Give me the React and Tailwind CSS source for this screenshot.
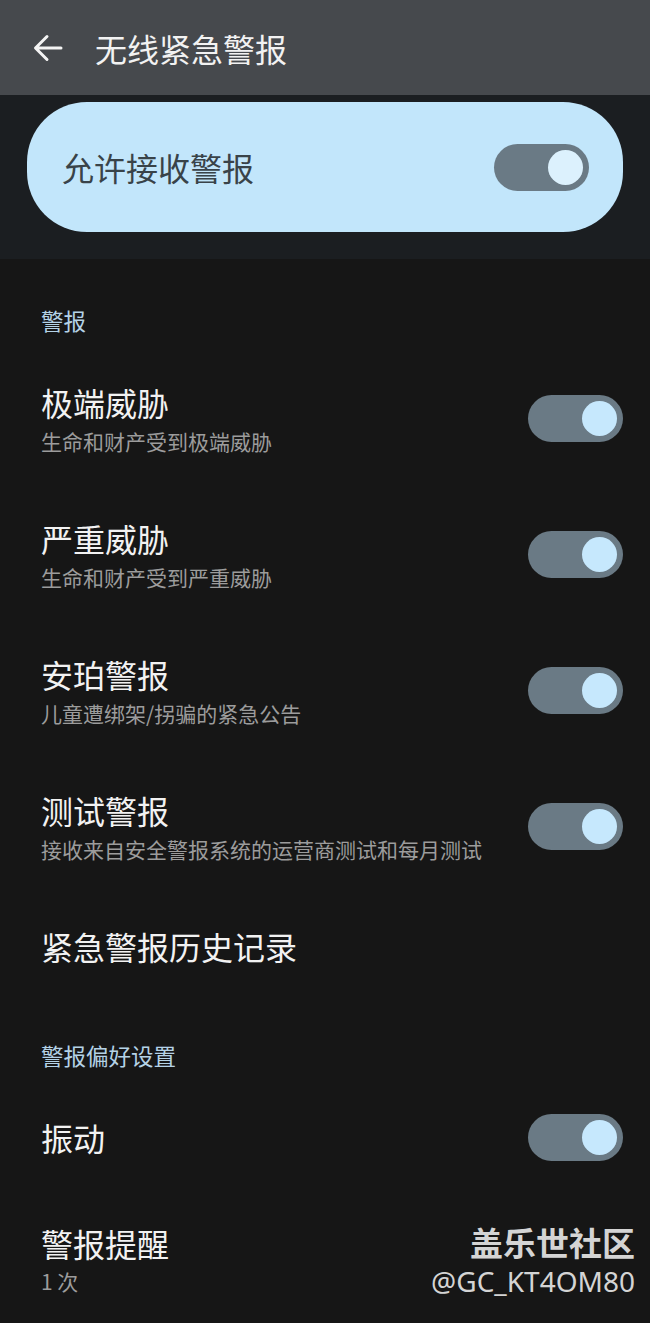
import React from "react";

const cjk = { fontFamily: '"Noto Sans CJK SC", "Noto Sans", sans-serif' };

function Toggle({ knob = "bg-[#c6e8fd]" }) {
  return (
    <div className="w-[95px] h-[47px] rounded-full bg-[#6a7a85] flex items-center justify-end pr-[6px] shrink-0">
      <div className={`w-[35px] h-[35px] rounded-full ${knob}`} />
    </div>
  );
}

function SwitchRow({ title, sub }) {
  return (
    <div className="h-[136px] flex items-center justify-between pl-[41px] pr-[27px]">
      <div className="flex flex-col">
        <span className="text-[32px] leading-[40px] text-[#f2f2f2]">{title}</span>
        <span className="mt-[5px] text-[21px] leading-[28px] text-[#9c9c9c]">{sub}</span>
      </div>
      <Toggle />
    </div>
  );
}

function SectionHeader({ children, pt }) {
  return (
    <div className={pt}>
      <span className="text-[22.5px] leading-[30px] text-[#b4d2e6]">{children}</span>
    </div>
  );
}

export default function App() {
  return (
    <div className="relative w-[650px] h-[1323px] overflow-hidden bg-[#161616]" style={cjk}>
      {/* top bar */}
      <div className="h-[95px] bg-[#46494d] flex items-center">
        <svg className="ml-[32px]" width="32" height="32" viewBox="0 0 32 32" fill="none">
          <path d="M29 16H4M15 4.5L3.5 16L15 27.5" stroke="#f4f4f4" strokeWidth="3" strokeLinecap="round" strokeLinejoin="round" />
        </svg>
        <span className="ml-[31px] text-[32px] leading-[40px] text-[#f2f2f2]">无线紧急警报</span>
      </div>

      {/* master switch */}
      <div className="bg-[#1b1e21] px-[27px] pt-[7px] pb-[27px]">
        <div className="h-[130px] rounded-[60px] bg-[#c2e6fb] flex items-center justify-between pl-[35px] pr-[34px]">
          <span className="text-[32px] leading-[40px] text-[#394349]">允许接收警报</span>
          <Toggle knob="bg-[#dcf1fd]" />
        </div>
      </div>

      <SectionHeader pt="h-[91px] pt-[46px] pl-[41px]">警报</SectionHeader>

      <SwitchRow title="极端威胁" sub="生命和财产受到极端威胁" />
      <SwitchRow title="严重威胁" sub="生命和财产受到严重威胁" />
      <SwitchRow title="安珀警报" sub="儿童遭绑架/拐骗的紧急公告" />
      <SwitchRow title="测试警报" sub="接收来自安全警报系统的运营商测试和每月测试" />

      <div className="h-[104px] flex items-center pl-[41px]">
        <span className="text-[32px] leading-[40px] text-[#f2f2f2]">紧急警报历史记录</span>
      </div>

      <SectionHeader pt="h-[92px] pt-[42px] pl-[41px]">警报偏好设置</SectionHeader>

      <div className="h-[94px] flex items-center justify-between pl-[41px] pr-[27px]">
        <span className="text-[32px] leading-[40px] text-[#f2f2f2]">振动</span>
        <Toggle />
      </div>

      <div className="pt-[39px] pl-[41px] flex flex-col">
        <span className="text-[32px] leading-[40px] text-[#f2f2f2]">警报提醒</span>
        <span className="mt-[4px] text-[21px] leading-[28px] text-[#9c9c9c]">1 次</span>
      </div>

      {/* watermark */}
      <div className="absolute right-[15px] top-[1225px] flex flex-col items-end gap-[5px]">
        <span className="text-[33px] leading-[34px] font-bold text-[#d4d4d4]">盖乐世社区</span>
        <span
          className="text-[28px] leading-[34px] text-[#d4d4d4]"
          style={{ fontFamily: '"Noto Sans", "Liberation Sans", sans-serif' }}
        >
          @GC_KT4OM80
        </span>
      </div>
    </div>
  );
}
